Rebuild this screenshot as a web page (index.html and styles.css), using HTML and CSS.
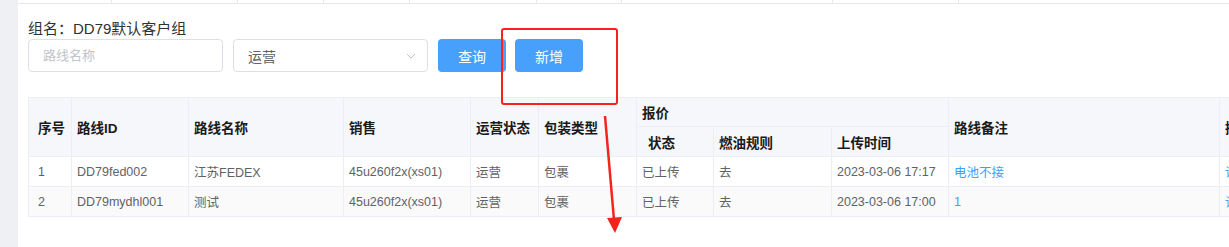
FILE: index.html
```html
<!DOCTYPE html>
<html lang="zh-CN">
<head>
    <meta charset="UTF-8">
    <title>路线列表</title>
    <link rel="stylesheet" href="styles.css">
</head>
<body>
    <div class="side"></div>
    <div class="main">
        <!-- 上方表格的残留行 -->
        <div class="top-strip">
            <span style="width:94px"></span>
            <span style="width:126px"></span>
            <span style="width:86px"></span>
            <span style="width:86px"></span>
            <span style="width:127px"></span>
            <span style="width:85px"></span>
            <span style="width:211px"></span>
            <span style="width:126px"></span>
            <span class="rest"></span>
        </div>

        <div class="content">
            <div class="group-name">组名：DD79默认客户组</div>

            <div class="search-bar">
                <input type="text" class="field" placeholder="路线名称">
                <div class="field select">
                    <span>运营</span>
                    <svg width="10" height="6" viewBox="0 0 10 6"><path d="M1 1 L5 5 L9 1" fill="none" stroke="#c0c4cc" stroke-width="1"/></svg>
                </div>
                <button class="btn">查询</button>
                <button class="btn">新增</button>
            </div>

            <table class="table">
                <colgroup>
                    <col style="width:43px">
                    <col style="width:117px">
                    <col style="width:155px">
                    <col style="width:127px">
                    <col style="width:68px">
                    <col style="width:98px">
                    <col style="width:77px">
                    <col style="width:118px">
                    <col style="width:117px">
                    <col style="width:271px">
                    <col style="width:90px">
                </colgroup>
                <thead>
                    <tr class="h1">
                        <th rowspan="2" class="first">序号</th>
                        <th rowspan="2">路线ID</th>
                        <th rowspan="2">路线名称</th>
                        <th rowspan="2">销售</th>
                        <th rowspan="2">运营状态</th>
                        <th rowspan="2">包装类型</th>
                        <th colspan="3">报价</th>
                        <th rowspan="2">路线备注</th>
                        <th rowspan="2">操作</th>
                    </tr>
                    <tr class="h2">
                        <th class="center-ish">状态</th>
                        <th>燃油规则</th>
                        <th>上传时间</th>
                    </tr>
                </thead>
                <tbody>
                    <tr>
                        <td class="first">1</td>
                        <td>DD79fed002</td>
                        <td>江苏FEDEX</td>
                        <td>45u260f2x(xs01)</td>
                        <td>运营</td>
                        <td>包裹</td>
                        <td>已上传</td>
                        <td>去</td>
                        <td>2023-03-06 17:17</td>
                        <td class="link">电池不接</td>
                        <td class="link">详情</td>
                    </tr>
                    <tr class="striped">
                        <td class="first">2</td>
                        <td>DD79mydhl001</td>
                        <td>测试</td>
                        <td>45u260f2x(xs01)</td>
                        <td>运营</td>
                        <td>包裹</td>
                        <td>已上传</td>
                        <td>去</td>
                        <td>2023-03-06 17:00</td>
                        <td class="link">1</td>
                        <td class="link">详情</td>
                    </tr>
                </tbody>
            </table>
        </div>
    </div>

    <!-- 截图上的红色标注 -->
    <div class="mark-box"></div>
    <svg class="mark-arrow" width="1229" height="247" viewBox="0 0 1229 247">
        <line x1="605" y1="116" x2="614" y2="220" stroke="#f5231c" stroke-width="2.5"/>
        <polygon points="607,218 622,217 615,233" fill="#f5231c"/>
    </svg>
</body>
</html>
```

FILE: styles.css
```css
body {
    margin: 0;
    padding: 0;
    display: flex;
    height: 247px;
    overflow: hidden;
    background: #fff;
    font-family: "Liberation Sans", "Noto Sans CJK SC", sans-serif;
}
.side {
    width: 18px;
    flex-shrink: 0;
    background: #eef0f4;
}
.main {
    flex: 1;
    min-width: 0;
    overflow: hidden;
}
.top-strip {
    display: flex;
    height: 3px;
    border-bottom: 1px solid #e6e8ee;
}
.top-strip span {
    flex-shrink: 0;
    border-right: 1px solid #e6e8ee;
    box-sizing: border-box;
}
.top-strip .rest {
    flex: 1;
    border-right: none;
}
.content {
    padding: 16px 0 0 10px;
}
.group-name {
    font-size: 15px;
    line-height: 18px;
    color: #303133;
    margin-bottom: 1px;
}
.search-bar {
    display: flex;
    align-items: center;
    height: 33px;
}
.field {
    box-sizing: border-box;
    width: 195px;
    height: 33px;
    margin-right: 10px;
    border: 1px solid #dcdfe6;
    border-radius: 4px;
    padding: 0 14px;
    font-family: inherit;
    font-size: 13px;
    color: #606266;
    outline: none;
}
.field::placeholder {
    color: #c0c4cc;
}
.select {
    display: flex;
    align-items: center;
    justify-content: space-between;
    font-size: 14px;
    padding: 0 11px 0 14px;
}
.btn {
    width: 68px;
    height: 33px;
    margin-right: 9px;
    border: none;
    border-radius: 4px;
    background: #46a0fc;
    color: #fff;
    font-family: inherit;
    font-size: 14px;
    cursor: pointer;
}
.table {
    margin-top: 25px;
    border-collapse: collapse;
    table-layout: fixed;
    width: 1281px;
}
.table th, .table td {
    border: 1px solid #ebeef5;
    text-align: left;
    padding: 0 0 0 5px;
    white-space: nowrap;
    overflow: hidden;
}
.table th {
    background: #f5f7fa;
    color: #1a1a1a;
    font-size: 13.5px;
    font-weight: bold;
}
.table thead tr.h1 {
    height: 29px;
}
.table thead tr.h2 {
    height: 30px;
}
.table th.center-ish {
    padding-left: 11px;
}
.table td {
    height: 29px;
    font-size: 12.5px;
    color: #606266;
}
.table .first {
    padding-left: 9px;
}
.table tr.striped td {
    background: #fafafa;
}
.table td.link {
    color: #409eff;
}
.mark-box {
    position: absolute;
    left: 501px;
    top: 28px;
    width: 113px;
    height: 73px;
    border: 2px solid #f5231c;
    border-radius: 3px;
}
.mark-arrow {
    position: absolute;
    left: 0;
    top: 0;
    pointer-events: none;
}
```
